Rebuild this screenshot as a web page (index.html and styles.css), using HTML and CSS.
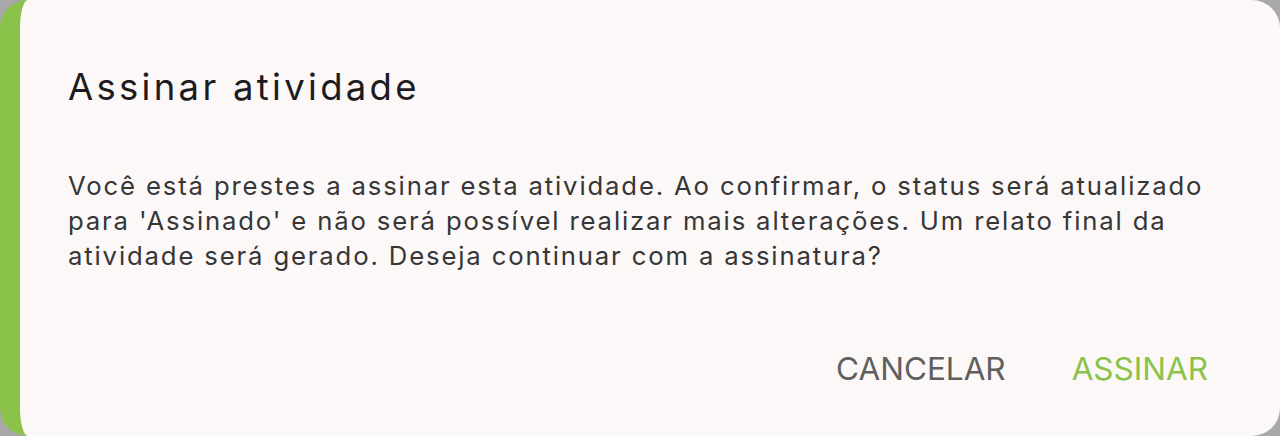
FILE: index.html
```html
<!DOCTYPE html>
<html lang="pt">
<head>
<meta charset="utf-8">
<link rel="stylesheet" href="styles.css">
</head>
<body>
<div class="dialog">
  <h1 class="title">Assinar atividade</h1>
  <p class="content">Você está prestes a assinar esta atividade. Ao confirmar, o status será atualizado para 'Assinado' e não será possível realizar mais alterações. Um relato final da atividade será gerado. Deseja continuar com a assinatura?</p>
  <div class="actions">
    <button class="btn btn-cancel">CANCELAR</button>
    <button class="btn btn-confirm">ASSINAR</button>
  </div>
</div>
</body>
</html>
```
FILE: styles.css
```css
html, body {
  margin: 0;
  padding: 0;
  background: #a8a8a8;
}
body {
  width: 1280px;
  height: 436px;
  overflow: hidden;
  font-family: Inter, "Noto Sans", sans-serif;
}
.dialog {
  box-sizing: border-box;
  width: 1280px;
  height: 436px;
  background: #fcf8f7;
  border-left: 20px solid #8bc34a;
  border-radius: 28px;
  padding: 59px 40px 0 48px;
  display: flex;
  flex-direction: column;
}
.title {
  margin: 0;
  font-size: 36.5px;
  line-height: 56px;
  font-weight: 400;
  letter-spacing: 3.3px;
  color: #1d1b20;
}
.content {
  margin: 53px 0 0 0;
  font-size: 25.7px;
  line-height: 35px;
  letter-spacing: 1.85px;
  color: #363636;
}
.actions {
  margin-top: auto;
  margin-bottom: 49px;
  padding-right: 32px;
  display: flex;
  justify-content: flex-end;
  gap: 66px;
}
.btn {
  border: 0;
  background: none;
  padding: 0;
  font-family: Inter, "Noto Sans", sans-serif;
  font-size: 31.5px;
  line-height: 36px;
  font-weight: 400;
  cursor: pointer;
}
.btn-cancel { color: #5f5f5f; }
.btn-confirm { color: #8bc34a; }
```
